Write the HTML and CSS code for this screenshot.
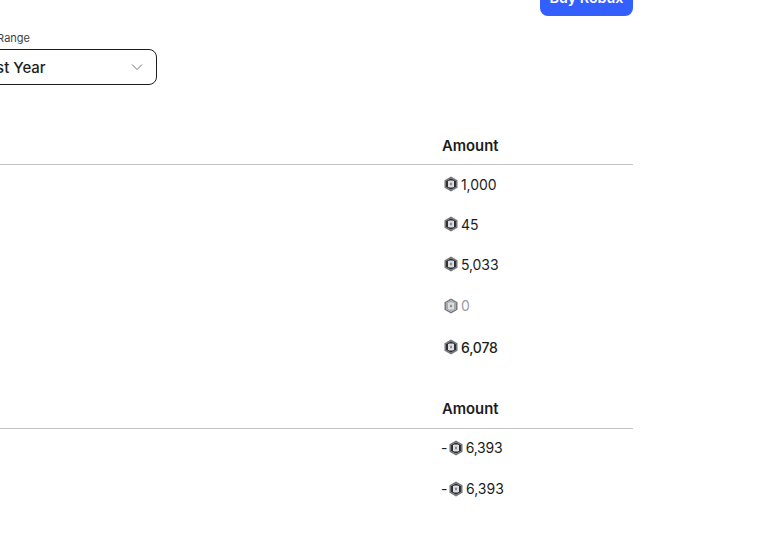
FILE: index.html
```html
<!DOCTYPE html>
<html lang="en">
<head>
<meta charset="utf-8">
<title>Robux Summary</title>
<link rel="stylesheet" href="styles.css">
</head>
<body>
<svg class="defs" width="0" height="0" aria-hidden="true">
  <defs>
    <symbol id="robux" viewBox="0 0 16 16">
      <path class="rim" fill-rule="evenodd" d="M8 .5 14.5 4.2V11.8L8 15.5 1.5 11.8V4.2ZM8 2.2 3 5.1V10.9L8 13.8 13 10.9V5.1Z"/>
      <path fill="currentColor" fill-rule="evenodd" d="M8 2.2 13 5.1V10.9L8 13.8 3 10.9V5.1ZM6.2 4.8Q5 4.8 5 6V10Q5 11.2 6.2 11.2H9.8Q11 11.2 11 10V6Q11 4.8 9.8 4.8Z"/>
      <path class="core" d="M6.2 4.8Q5 4.8 5 6V10Q5 11.2 6.2 11.2H9.8Q11 11.2 11 10V6Q11 4.8 9.8 4.8Z"/>
      <rect class="pip" x="7" y="6.8" width="2" height="2.4"/>
    </symbol>
  </defs>
</svg>
<main class="page">
  <header class="topbar"><button class="buy">Buy Robux</button></header>
  <section class="filter">
    <div class="label">Date Range</div>
    <div class="select">
      <span>Past Year</span>
      <svg class="chev" viewBox="0 0 12 8"><path d="M1 1.5 6 6.5 11 1.5" fill="none" stroke="currentColor" stroke-width="1"/></svg>
    </div>
  </section>
  <div class="table first">
    <div class="head"><span></span><span>Amount</span></div>
    <div class="row r1 lead"><span></span><span class="amt"><svg class="ico"><use href="#robux"/></svg>1,000</span></div>
    <div class="row r1"><span></span><span class="amt"><svg class="ico"><use href="#robux"/></svg>45</span></div>
    <div class="row r1"><span></span><span class="amt"><svg class="ico"><use href="#robux"/></svg>5,033</span></div>
    <div class="row r2 gap"><span></span><span class="amt muted"><svg class="ico"><use href="#robux"/></svg>0</span></div>
    <div class="row r3"><span></span><span class="amt total"><svg class="ico"><use href="#robux"/></svg>6,078</span></div>
  </div>
  <div class="table second">
    <div class="head"><span></span><span>Amount</span></div>
    <div class="row r2 lead2"><span></span><span class="amt neg"><span class="minus">-</span><svg class="ico"><use href="#robux"/></svg>6,393</span></div>
    <div class="row r2"><span></span><span class="amt neg total2"><span class="minus">-</span><svg class="ico"><use href="#robux"/></svg>6,393</span></div>
  </div>
</main>
</body>
</html>
```
FILE: styles.css
```css
html, body { margin: 0; padding: 0; height: 533px; overflow: hidden; background: #fff; }
body { font-family: Inter, "Liberation Sans", sans-serif; color: #1c1d21; }
.defs { position: absolute; }
.rim { fill: #77787e; }
.core { fill: #dcdde0; }
.pip { fill: #8a8b90; }
.page { width: 723px; margin-left: -90px; display: flex; flex-direction: column; }
.topbar { display: flex; justify-content: flex-end; height: 16px; align-items: flex-end; }
.buy { width: 93px; height: 36px; flex: none; border: 0; border-radius: 8px; background: #335fff; color: #fff; font: 600 14.3px/36px Inter, sans-serif; padding: 0; }
.filter { margin-top: 15px; width: 247px; }
.label { font-size: 11px; line-height: 14px; color: #3d3f46; height: 18px; box-sizing: border-box; padding-left: 60px; }
.select { box-sizing: border-box; height: 36px; border: 1px solid #1c1d21; border-radius: 8px; display: flex; align-items: center; justify-content: space-between; padding: 0 13px 0 67px; font-size: 15px; font-weight: 500; }
.chev { width: 12px; height: 8px; color: #6e7079; }
.table { display: flex; flex-direction: column; }
.first { margin-top: 43px; }
.second { margin-top: 24px; }
.head, .row { display: grid; grid-template-columns: 532px 1fr; align-items: center; }
.head { height: 34px; padding-bottom: 2px; border-bottom: 1px solid #c3c3c8; font-size: 14.8px; font-weight: 600; }
.first .head { height: 32px; padding-top: 2px; }
.row { font-size: 14px; }
.r1 { height: 40px; }
.r2 { height: 41px; }
.r3 { height: 42px; }
.lead { margin-top: -1px; }
.gap { margin-top: 1px; }
.lead2 { margin-top: -2px; }
.amt { display: flex; align-items: center; letter-spacing: -0.1px; }
.ico { width: 16px; height: 16px; margin: 0 2px 0 1px; color: #2f3036; }
.muted { color: #9a9ba0; }
.muted .ico { color: #a9aaae; }
.muted .rim { fill: #b5b6ba; }
.muted .core { fill: #eeeef0; }
.muted .pip { fill: #c4c5c8; }
.total { font-weight: 500; letter-spacing: -0.2px; }
.neg { letter-spacing: -0.25px; }
.neg .ico { margin: 0 1.5px 0 0; }
.minus { margin-left: -1px; margin-right: 1px; }
.total2 { letter-spacing: 0; }
```
